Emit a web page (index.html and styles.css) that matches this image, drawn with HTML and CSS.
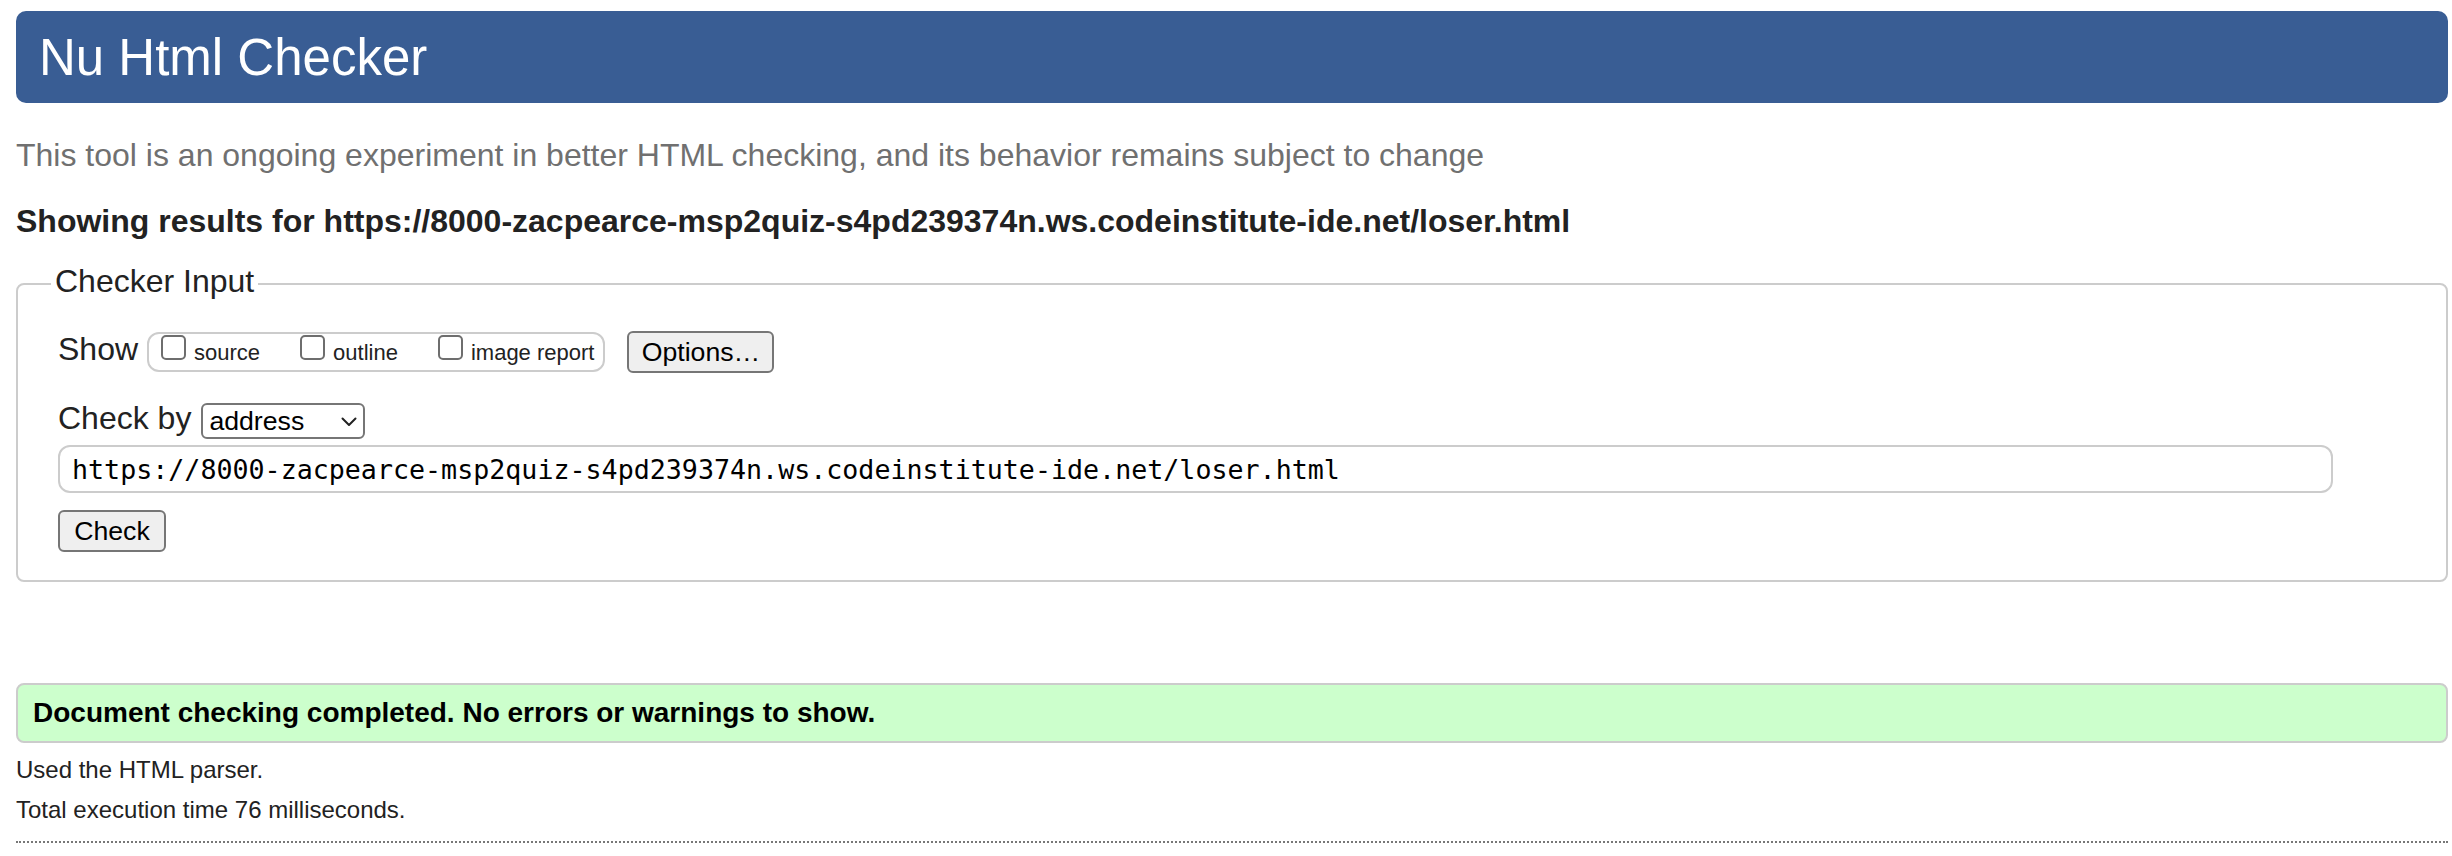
FILE: index.html
```
<!DOCTYPE html>
<html lang="en">
<head>
<meta charset="utf-8">
<title>Showing results for https://8000-zacpearce-msp2quiz-s4pd239374n.ws.codeinstitute-ide.net/loser.html - Nu Html Checker</title>
<link rel="stylesheet" href="styles.css">
</head>
<body>
<h1 class="title">Nu Html Checker</h1>
<p class="intro">This tool is an ongoing experiment in better HTML checking, and its behavior remains subject to change</p>
<h2 class="showing">Showing results for https://8000-zacpearce-msp2quiz-s4pd239374n.ws.codeinstitute-ide.net/loser.html</h2>
<form class="form">
  <fieldset class="fs">
    <legend class="legend">Checker Input</legend>
    <div class="inner">
      <div class="row row-show">
        <span class="lbl">Show</span>
        <span class="group">
          <label class="opt"><input type="checkbox" class="cb"><span class="opt-text">source</span></label>
          <label class="opt"><input type="checkbox" class="cb"><span class="opt-text">outline</span></label>
          <label class="opt"><input type="checkbox" class="cb"><span class="opt-text">image report</span></label>
        </span>
        <button type="button" class="btn btn-options">Options…</button>
      </div>
      <div class="row row-by">
        <span class="lbl">Check by</span>
        <span class="sel-wrap">
          <select class="sel"><option>address</option></select>
          <svg class="chev" width="16" height="10" viewBox="0 0 16 10"><path d="M1.5 1.5 L8 8 L14.5 1.5" fill="none" stroke="#222" stroke-width="2" stroke-linecap="round" stroke-linejoin="round"/></svg>
        </span>
      </div>
      <input class="url" type="text" value="https://8000-zacpearce-msp2quiz-s4pd239374n.ws.codeinstitute-ide.net/loser.html">
      <button type="button" class="btn btn-check">Check</button>
    </div>
  </fieldset>
</form>
<div class="success"><p class="success-text">Document checking completed. No errors or warnings to show.</p></div>
<p class="note note-first">Used the HTML parser.</p>
<p class="note">Total execution time 76 milliseconds.</p>
<hr class="dots">
</body>
</html>
```
FILE: styles.css
```
html, body {
  background: #fff;
}
body {
  margin: 11px 4px 0 16px;
  font-family: "Liberation Sans", Arial, Helvetica, sans-serif;
  color: #222;
}
.title {
  margin: 0;
  height: 92px;
  box-sizing: border-box;
  padding: 18px 23px 16px;
  background: #395d94;
  color: #fff;
  font-weight: normal;
  font-size: 51px;
  line-height: 58px;
  border-radius: 10px;
}
.intro {
  margin: 32px 0 0;
  font-size: 32px;
  line-height: 40px;
  color: #707070;
}
.showing {
  margin: 26px 0 0;
  font-size: 32px;
  line-height: 40px;
  font-weight: bold;
  color: #222;
}
.form {
  margin: 20px 0 0;
}
.fs {
  margin: 0;
  border: 2px solid #cccccc;
  border-radius: 8px;
  padding: 0 0 28px 33px;
}
.legend {
  padding: 0 4px 5px;
  font-size: 32px;
  line-height: 40px;
  color: #222;
}
.inner {
  margin-left: 7px;
  padding-top: 25px;
}
.row {
  display: flex;
  align-items: center;
}
.row-by {
  margin-top: 28px;
}
.lbl {
  font-size: 32px;
  line-height: 34px;
  padding-bottom: 6px;
  color: #222;
}
.group {
  display: flex;
  align-items: flex-start;
  gap: 40px;
  height: 40px;
  box-sizing: border-box;
  margin-left: 9px;
  padding: 0 9px 0 12px;
  border: 2px solid #cccccc;
  border-radius: 12px;
}
.opt {
  display: flex;
  align-items: flex-start;
  gap: 8px;
}
.cb {
  appearance: none;
  -webkit-appearance: none;
  margin: 1px 0 0;
  width: 25px;
  height: 25px;
  box-sizing: border-box;
  border: 2px solid #6e6e6e;
  border-radius: 5px;
  background: #fff;
}
.opt-text {
  margin-top: 6px;
  font-size: 22px;
  line-height: 26px;
  color: #222;
}
.btn {
  height: 42px;
  box-sizing: border-box;
  padding: 0;
  border: 2px solid #767676;
  border-radius: 6px;
  background: #efefef;
  color: #000;
  font-family: "Liberation Sans", Arial, Helvetica, sans-serif;
  font-size: 26.67px;
  line-height: 36px;
  text-align: center;
}
.btn-options {
  width: 147px;
  margin-left: 22px;
}
.btn-check {
  display: block;
  width: 108px;
  margin-top: 17px;
}
.sel-wrap {
  position: relative;
  margin-left: 10px;
  display: block;
}
.sel {
  appearance: none;
  -webkit-appearance: none;
  display: block;
  width: 164px;
  height: 36px;
  box-sizing: border-box;
  margin: 0;
  padding: 0 0 0 6px;
  border: 2px solid #767676;
  border-radius: 6px;
  background: #fff;
  color: #000;
  font-family: "Liberation Sans", Arial, Helvetica, sans-serif;
  font-size: 26.67px;
  line-height: 32px;
}
.chev {
  position: absolute;
  left: 140px;
  top: 14px;
  pointer-events: none;
}
.url {
  display: block;
  margin: 4px 0 0;
  width: 2275px;
  height: 48px;
  box-sizing: border-box;
  padding: 0 12px;
  border: 2px solid #cccccc;
  border-radius: 12px;
  font-family: "DejaVu Sans Mono", "Liberation Mono", monospace;
  font-size: 26.67px;
  color: #000;
  background: #fff;
}
.success {
  margin-top: 101px;
  height: 60px;
  box-sizing: border-box;
  padding: 0 15px;
  border: 2px solid #cccccc;
  border-radius: 8px;
  background: #ccffcc;
  display: flex;
  align-items: center;
}
.success-text {
  margin: 0;
  font-size: 28px;
  line-height: 40px;
  font-weight: bold;
  color: #000;
}
.note {
  margin: 10px 0 0;
  font-size: 24px;
  line-height: 30px;
  color: #222;
}
.note-first {
  margin-top: 12px;
}
.dots {
  margin: 16px 0 0;
  border: 0;
  border-top: 2px dotted #777;
  height: 0;
}
```
